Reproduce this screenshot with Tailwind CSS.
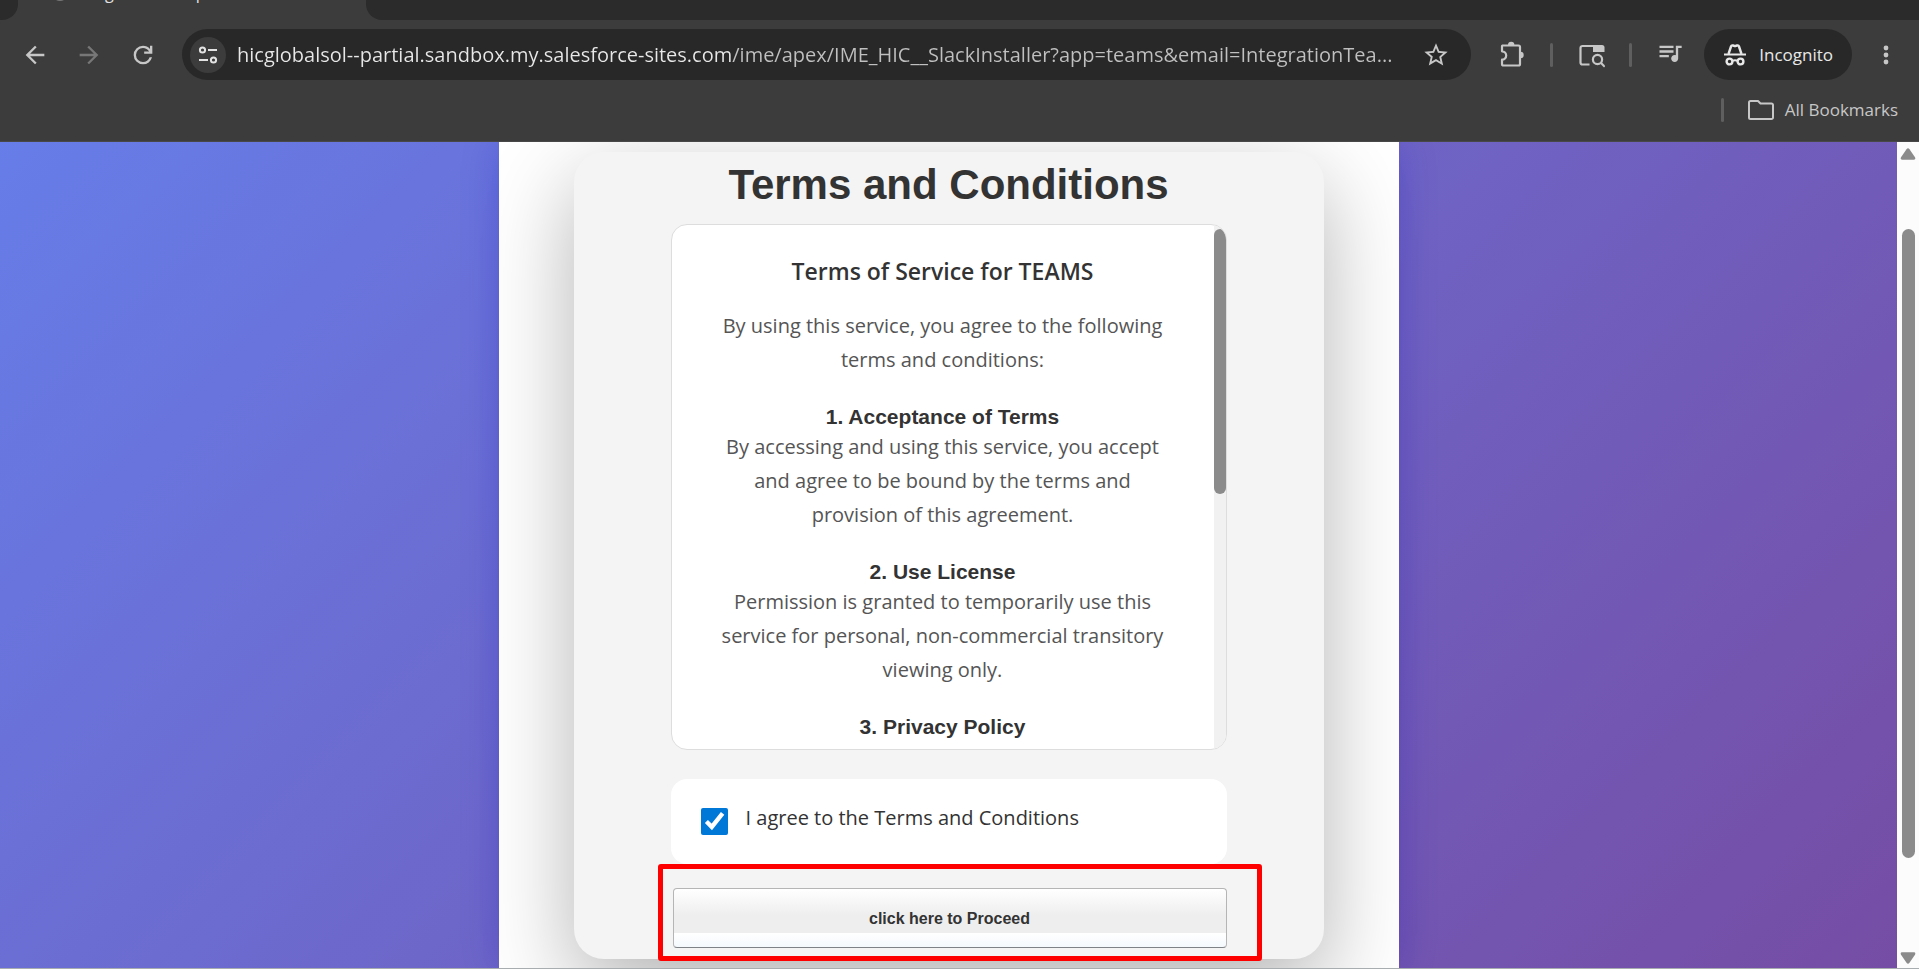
<!DOCTYPE html>
<html lang="en">
  <head>
    <meta charset="UTF-8" />
    <meta name="viewport" content="width=device-width, initial-scale=1.0" />
    <title>Terms and Conditions</title>
    <script src="https://cdn.jsdelivr.net/npm/@tailwindcss/browser@4"></script>
  </head>

  <body
    class="flex h-screen flex-col overflow-hidden bg-[#3c3c3c] font-['Open_Sans','Noto_Sans',sans-serif]"
  >
    <!-- Browser header -->
    <header class="shrink-0 border-b border-[#484848] bg-[#3c3c3c] text-[#c7c7c7]">
      <!-- Tab strip -->
      <div class="flex h-5 overflow-hidden">
        <div class="w-[18px] rounded-br-2xl bg-[#2b2b2b]"></div>
        <div class="flex h-5 w-[348px] items-end gap-2 overflow-hidden pl-[34px]">
          <span class="mb-[19px] size-4 rounded-full bg-[#777]"></span>
          <span class="mb-[17px] text-base leading-5 text-[#e3e3e3]">Integration Setup</span>
        </div>
        <div class="flex-1 rounded-bl-2xl bg-[#2b2b2b]"></div>
      </div>

      <!-- Toolbar -->
      <div class="flex items-center pt-[9px] pr-[19px] pl-[21px]">
        <nav class="mr-[25px] flex gap-[26px]">
          <button type="button" aria-label="Back">
            <svg class="size-7" viewBox="0 0 24 24" fill="currentColor">
              <path d="M20 11H7.83l5.59-5.59L12 4l-8 8 8 8 1.41-1.41L7.83 13H20v-2z" />
            </svg>
          </button>
          <button type="button" aria-label="Forward" class="text-[#777]">
            <svg class="size-7" viewBox="0 0 24 24" fill="currentColor">
              <path d="M4 11h12.17l-5.59-5.59L12 4l8 8-8 8-1.41-1.41L16.17 13H4v-2z" />
            </svg>
          </button>
          <button type="button" aria-label="Reload">
            <svg class="size-7" viewBox="0 0 24 24" fill="currentColor">
              <path
                d="M12 20q-3.35 0-5.675-2.325T4 12q0-3.35 2.325-5.675T12 4q1.725 0 3.3.712T18 6.75V4h2v7h-7V9h4.2q-.8-1.4-2.187-2.2T12 6Q9.5 6 7.75 7.75T6 12t1.75 4.25T12 18q1.925 0 3.475-1.1T17.65 14h2.1q-.7 2.65-2.85 4.325T12 20z"
              />
            </svg>
          </button>
        </nav>

        <!-- Address bar -->
        <div class="flex h-[51px] min-w-0 flex-1 items-center rounded-full bg-[#282828] pr-[21px] pl-2">
          <button
            type="button"
            aria-label="Site information"
            class="flex size-9 shrink-0 items-center justify-center rounded-full bg-[#3c3c3c] text-[#e3e3e3]"
          >
            <svg class="size-5" viewBox="0 0 20 20" fill="none" stroke="currentColor" stroke-width="2">
              <circle cx="4.5" cy="5" r="2.6" />
              <path d="M10 5h9M1 15h9" />
              <circle cx="15.5" cy="15" r="2.6" />
            </svg>
          </button>
          <input
            type="text"
            aria-label="Address"
            value="hicglobalsol--partial.sandbox.my.salesforce-sites.com/ime/apex/IME_HIC__SlackInstaller?app=teams&amp;email=IntegrationTea..."
            class="ml-[11px] min-w-0 flex-1 bg-[linear-gradient(90deg,#e8e8e8_494px,#c0c0c0_494px)] bg-clip-text text-xl text-transparent outline-none"
          />
          <button type="button" aria-label="Bookmark this tab" class="ml-4 shrink-0">
            <svg class="size-7" viewBox="0 0 24 24" fill="currentColor">
              <path
                d="M22 9.24l-7.19-.62L12 2 9.19 8.63 2 9.24l5.46 4.73L5.82 21 12 17.27 18.18 21l-1.63-7.03L22 9.24zM12 15.4l-3.76 2.27 1-4.28-3.32-2.88 4.38-.38L12 6.1l1.71 4.04 4.38.38-3.32 2.88 1 4.28L12 15.4z"
              />
            </svg>
          </button>
        </div>

        <!-- Toolbar actions -->
        <div class="ml-[27px] flex items-center gap-6">
          <button type="button" aria-label="Extensions">
            <svg class="size-7" viewBox="0 0 28 28">
              <path
                d="M4.500 4.500h16a1.500 1.500 0 0 1 1.500 1.500v17a1.500 1.500 0 0 1-1.500 1.500h-15a1.500 1.500 0 0 1-1.500-1.500v-4.300a4.200 4.200 0 0 0 0-8.400v-5a.8.8 0 0 1 .5-.8z"
                fill="none"
                stroke="currentColor"
                stroke-width="2.200"
                stroke-linejoin="round"
              />
              <path d="M10 4a3.200 3.200 0 0 1 6.400 0zM22.500 10.800a3.200 3.200 0 0 1 0 6.400z" fill="currentColor" />
            </svg>
          </button>
          <span class="h-6 w-[3px] rounded-full bg-[#5f5f5f]"></span>
          <button type="button" aria-label="Search side panel">
            <svg class="size-7" viewBox="0 0 28 28" fill="none" stroke="currentColor" stroke-width="2.200">
              <path d="M12.500 23.500H5.500a2 2 0 0 1-2-2V7a2 2 0 0 1 2-2H24" />
              <path d="M16 4h9a2.500 2.500 0 0 1 2.500 2.500V11H16z" fill="currentColor" stroke="none" />
              <circle cx="20.500" cy="18.500" r="4.600" />
              <path d="M23.800 21.800l4 4" />
            </svg>
          </button>
          <span class="h-6 w-[3px] rounded-full bg-[#5f5f5f]"></span>
          <button type="button" aria-label="Media controls">
            <svg class="size-7" viewBox="0 0 24 24" fill="currentColor">
              <path
                d="M15 4H3v2h12V4zm0 4H3v2h12V8zM3 14h8v-2H3v2zM17 4v8.180c-.310-.110-.650-.180-1-.180-1.660 0-3 1.340-3 3s1.340 3 3 3 3-1.340 3-3V6h3V4h-5z"
              />
            </svg>
          </button>
        </div>
        <button
          type="button"
          class="ml-5 flex h-[51px] items-center gap-3 rounded-full bg-[#282828] px-[19px] text-[17px] text-[#e8e8e8]"
        >
          <svg class="size-6" viewBox="0 0 24 24" fill="none" stroke="currentColor" stroke-width="2">
            <path d="M1 11.500h22" />
            <path
              d="M5.500 11l2.500-7.500q.5-1.500 2-1l2 .7 2-.7q1.500-.5 2 1L18.500 11"
              stroke-width="2.400"
              stroke-linejoin="round"
            />
            <circle cx="6.500" cy="18.500" r="2.900" stroke-width="2.400" />
            <circle cx="17.500" cy="18.500" r="2.900" stroke-width="2.400" />
            <path d="M9.300 18q2.700-1.500 5.400 0" />
          </svg>
          Incognito
        </button>
        <button type="button" aria-label="Menu" class="ml-5">
          <svg class="size-7" viewBox="0 0 28 28" fill="currentColor">
            <circle cx="14" cy="7" r="2.400" />
            <circle cx="14" cy="14" r="2.400" />
            <circle cx="14" cy="21" r="2.400" />
          </svg>
        </button>
      </div>

      <!-- Bookmarks bar -->
      <div class="flex h-[61px] items-center justify-end pr-[21px] pb-0.5">
        <span class="mr-6 h-6 w-[3px] rounded-full bg-[#5f5f5f]"></span>
        <button type="button" class="flex items-center gap-[11px] text-[17px]">
          <svg
            class="h-5 w-[26px]"
            viewBox="0 0 26 20"
            fill="none"
            stroke="currentColor"
            stroke-width="2"
            stroke-linejoin="round"
          >
            <path d="M1 2.500A1.500 1.500 0 0 1 2.500 1H10l2.500 2.500h11A1.500 1.500 0 0 1 25 5v12.500a1.500 1.500 0 0 1-1.500 1.500h-21A1.500 1.500 0 0 1 1 17.500z" />
          </svg>
          All Bookmarks
        </button>
      </div>
    </header>

    <div class="flex min-h-0 flex-1 border-b border-[#a8aeb0]">
      <!-- Page -->
      <main
        class="flex flex-1 justify-center overflow-hidden bg-[linear-gradient(135deg,#667eea_-3%,#764ba2_104%)]"
      >
        <div class="w-[900px] bg-white px-[75px] pt-[10px] shadow-[0_0_37px_rgba(0,0,200,0.2)]">
          <form
            class="rounded-[30px] bg-[#f4f4f4] px-[97px] pt-[9px] pb-[11px] shadow-[0_30px_90px_rgba(0,0,0,0.3)]"
          >
            <h1
              class="mb-[15px] text-center font-['Liberation_Sans',Arial,sans-serif] text-[42px] leading-[48px] font-bold whitespace-nowrap text-[#333]"
            >
              Terms and Conditions
            </h1>

            <!-- Terms text -->
            <div class="flex h-[526px] overflow-hidden rounded-2xl border border-[#ddd] bg-white">
              <div class="flex-1 overflow-hidden px-12 pt-[29px] text-center text-xl leading-[34px] text-[#555]">
                <h2 class="mb-[21px] text-[23px] leading-[34px] font-semibold text-[#333]">
                  Terms of Service for TEAMS
                </h2>
                <p class="mb-[26px]">
                  By using this service, you agree to the following terms and conditions:
                </p>

                <h3 class="font-['Liberation_Sans',Arial,sans-serif] text-[21px] leading-[27px] font-bold text-[#333]">
                  1. Acceptance of Terms
                </h3>
                <p class="mb-[26px]">
                  By accessing and using this service, you accept and agree to be bound by the terms and
                  provision of this agreement.
                </p>

                <h3 class="font-['Liberation_Sans',Arial,sans-serif] text-[21px] leading-[27px] font-bold text-[#333]">
                  2. Use License
                </h3>
                <p class="mb-[26px]">
                  Permission is granted to temporarily use this service for personal, non-commercial
                  transitory viewing only.
                </p>

                <h3 class="font-['Liberation_Sans',Arial,sans-serif] text-[21px] leading-[27px] font-bold text-[#333]">
                  3. Privacy Policy
                </h3>
              </div>
              <div class="w-3 bg-[#f1f1f1] pt-1">
                <div class="h-[265px] rounded-full bg-[#8b8b8b]"></div>
              </div>
            </div>

            <label
              class="mt-[29px] flex h-[85px] items-center gap-[18px] rounded-2xl bg-white px-[30px] text-xl font-medium text-[#333]"
            >
              <input type="checkbox" checked class="size-[27px] accent-[#0078d7]" />
              <span class="pb-2">I agree to the Terms and Conditions</span>
            </label>

            <div class="relative pt-6 pl-0.5">
              <button
                type="button"
                class="h-[60px] w-full rounded border border-[#b5b5b5] border-b-[#7f8387] bg-[linear-gradient(180deg,#fff_0%,#eee_45%,#eee_76%,#fff_76%,#f4f9fd_100%)] pt-0.5 font-['Liberation_Sans',Arial,sans-serif] text-base font-bold text-[#333]"
              >
                click here to Proceed
              </button>
              <!-- Highlight frame -->
              <div
                class="pointer-events-none absolute top-0 -right-[35px] -bottom-[13px] -left-[13px] rounded-[3px] border-5 border-[#f00]"
              ></div>
            </div>
          </form>
        </div>
      </main>

      <!-- Page scrollbar -->
      <div class="flex w-[22px] flex-col items-center bg-[#fcfcfc] pt-1.5 pb-1 text-[#8b8b8b]">
        <svg class="h-3 w-4" viewBox="0 0 16 12" fill="currentColor">
          <path d="M6.500 1.200q1.500-1.800 3 0l5.500 8q1 2.500-1 2.500H2q-2 0-1-2.500z" />
        </svg>
        <div class="mt-[69px] mb-[94px] w-[13px] flex-1 rounded-full bg-[#8b8b8b]"></div>
        <svg class="h-3 w-4 rotate-180" viewBox="0 0 16 12" fill="currentColor">
          <path d="M6.500 1.200q1.500-1.800 3 0l5.500 8q1 2.500-1 2.500H2q-2 0-1-2.500z" />
        </svg>
      </div>
    </div>
  </body>
</html>
